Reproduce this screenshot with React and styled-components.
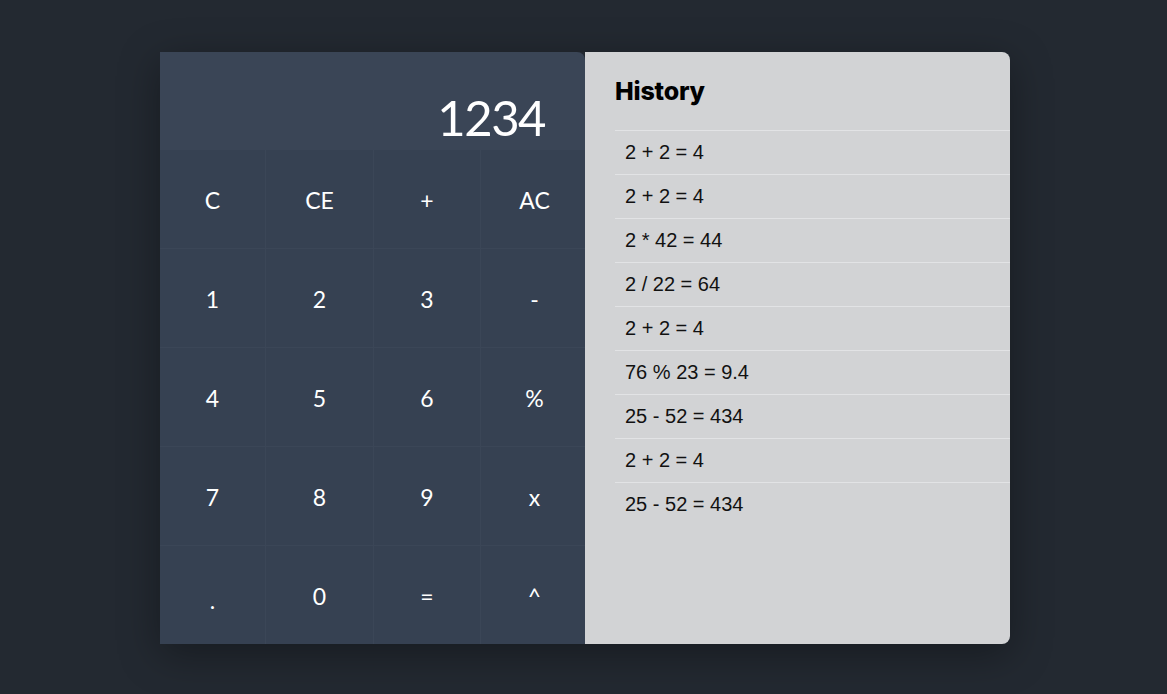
import React from "react";
import styled, { createGlobalStyle } from "styled-components";

const Global = createGlobalStyle`
  html, body { margin: 0; padding: 0; }
  body {
    background: #232931;
    font-family: "Lato", "Liberation Sans", sans-serif;
    height: 694px;
    overflow: hidden;
  }
`;

const Page = styled.div`
  display: flex;
  justify-content: flex-start;
  padding: 52px 0 0 160px;
`;

const Shell = styled.div`
  display: flex;
  box-shadow: 0 10px 40px rgba(0, 0, 0, 0.35);
  border-radius: 0 8px 8px 0;
`;

const Calc = styled.div`
  width: 425px;
  height: 592px;
  display: flex;
  flex-direction: column;
  background: #3a4556;
  border-top-right-radius: 8px;
`;

const Display = styled.div`
  height: 98px;
  display: flex;
  align-items: center;
  justify-content: flex-end;
  padding: 32px 40px 0;
  box-sizing: border-box;
  color: #ffffff;
  font-family: "Lato", sans-serif;
  font-size: 49px;
  font-weight: 400;
  letter-spacing: -1.5px;
`;

const Keys = styled.div`
  flex: 1;
  display: grid;
  grid-template-columns: 105px 107px 106px 107px;
  grid-template-rows: repeat(5, 1fr);
  gap: 1px;
  background: #3b4657;
`;

const Key = styled.button`
  border: none;
  background: #364152;
  color: #ffffff;
  font-family: "Lato", sans-serif;
  font-size: 23px;
  font-weight: 400;
  display: flex;
  align-items: center;
  justify-content: center;
  padding: 0;
  padding-top: ${(p) => (p.$dot ? "10px" : "2px")};
  cursor: pointer;
`;

const History = styled.div`
  width: 425px;
  height: 592px;
  background: #d2d3d5;
  border-radius: 0 8px 8px 0;
  padding: 22px 0 0 30px;
  box-sizing: border-box;
`;

const Title = styled.h2`
  margin: 0 0 22px;
  font-family: "Inter", sans-serif;
  font-weight: 800;
  font-size: 25px;
  color: #000;
  letter-spacing: -0.2px;
  line-height: 34px;
`;

const List = styled.ul`
  list-style: none;
  margin: 0;
  padding: 0;
`;

const Item = styled.li`
  height: 44px;
  border-top: 1px solid #e2e3e5;
  box-sizing: border-box;
  padding-left: 10px;
  display: flex;
  align-items: center;
  font-family: "Liberation Sans", Arial, sans-serif;
  font-size: 20px;
  color: #111;
`;

const keys = ["C", "CE", "+", "AC", "1", "2", "3", "-", "4", "5", "6", "%", "7", "8", "9", "x", ".", "0", "=", "^"];

const history = [
  "2 + 2 = 4",
  "2 + 2 = 4",
  "2 * 42 = 44",
  "2 / 22 = 64",
  "2 + 2 = 4",
  "76 % 23 = 9.4",
  "25 - 52 = 434",
  "2 + 2 = 4",
  "25 - 52 = 434",
];

export default function App() {
  return (
    <>
      <Global />
      <Page>
        <Shell>
          <Calc>
            <Display>1234</Display>
            <Keys>
              {keys.map((k, i) => (
                <Key key={i} $dot={k === "."}>{k}</Key>
              ))}
            </Keys>
          </Calc>
          <History>
            <Title>History</Title>
            <List>
              {history.map((h, i) => (
                <Item key={i}>{h}</Item>
              ))}
            </List>
          </History>
        </Shell>
      </Page>
    </>
  );
}
